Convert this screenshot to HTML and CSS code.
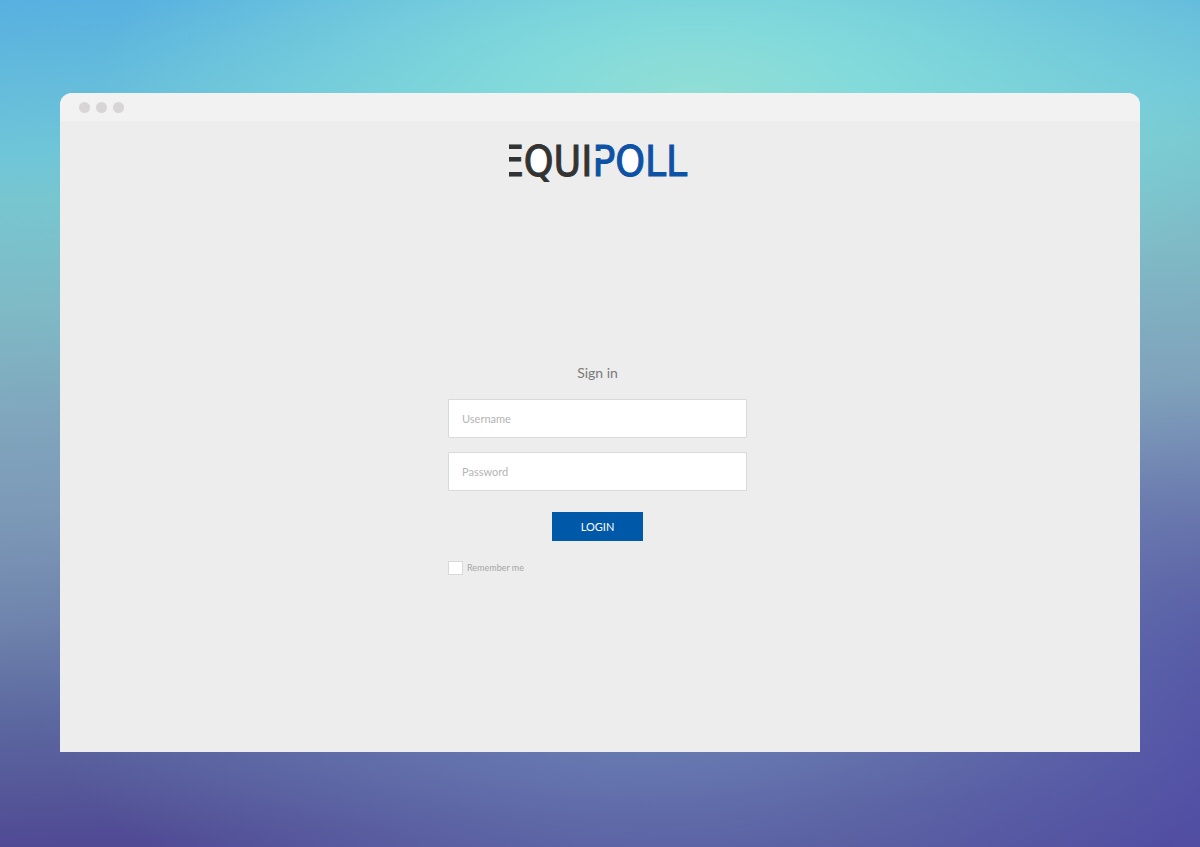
FILE: index.html
```
<!DOCTYPE html>
<html lang="en">
<head>
    <meta charset="UTF-8">
    <meta name="viewport" content="width=device-width, initial-scale=1.0">
    <title>Equipoll - Sign in</title>
    <link rel="stylesheet" href="styles.css">
</head>
<body>
    <div class="window">
        <!-- Window bar -->
        <div class="window-bar">
            <span class="dot"></span>
            <span class="dot"></span>
            <span class="dot"></span>
        </div>

        <main class="content">
            <h1 class="logo"><span class="logo-dark"><span class="cut-e">E</span><span class="fill-o">Q</span>UI</span><span class="logo-blue"><span class="cut-p">P</span><span class="fill-o">O</span>LL</span></h1>

            <!-- Login form -->
            <form class="login-form">
                <h2>Sign in</h2>
                <input class="field" type="text" placeholder="Username" aria-label="Username">
                <input class="field" type="password" placeholder="Password" aria-label="Password">
                <button type="submit">LOGIN</button>
                <div class="remember">
                    <input type="checkbox" id="remember">
                    <label for="remember">Remember me</label>
                </div>
            </form>
        </main>
    </div>
</body>
</html>
```
FILE: styles.css
```
* {
    box-sizing: border-box;
}

body {
    margin: 0;
    padding: 93px 5% 95px;
    min-height: 100vh;
    display: flex;
    font-family: Lato, sans-serif;
    background:
        radial-gradient(50% 30% at 58% 11%, #90ded6 0%, rgba(134, 222, 219, 0.85) 30%, rgba(134, 222, 219, 0) 100%),
        radial-gradient(52% 38% at 54% 78%, #6f88b9 0%, rgba(103, 121, 178, 0.8) 40%, rgba(90, 101, 171, 0) 100%),
        radial-gradient(30% 45% at 100% 90%, #5250a6 0%, rgba(82, 80, 166, 0) 100%),
        linear-gradient(177deg, #57b0e0 0%, #6fc5d8 17%, #77c6d0 22%, #7fbac6 34%, #80a6bd 46%, #7d9ab8 56%, #7085ad 68%, #5c68a0 79%, #504a94 93%, #4f4a96 100%);
}

.window {
    flex: 1;
    display: flex;
    flex-direction: column;
    background-color: #ededed;
    border-radius: 12px 12px 0 0;
    overflow: hidden;
}

.window-bar {
    display: flex;
    align-items: center;
    gap: 6px;
    height: 28px;
    padding-left: 19px;
    background-color: #f2f2f2;
}

.dot {
    width: 11px;
    height: 11px;
    border-radius: 50%;
    background-color: #d7d5d6;
}

.content {
    flex: 1;
    display: flex;
    flex-direction: column;
    align-items: center;
    padding: 17px 5px 0 0;
}

/* Logo */
.logo {
    margin: 0 8px 0 0;
    font-family: "DejaVu Sans Condensed", "DejaVu Sans", sans-serif;
    font-size: 42px;
    font-weight: normal;
    line-height: 48px;
    -webkit-text-stroke: 1px;
}

.logo-dark {
    color: #333333;
}

.logo-blue {
    color: #0d52a5;
}

.cut-e, .cut-p, .fill-o {
    position: relative;
    display: inline-block;
    z-index: 0;
}

/* Gaps in the stems of E and P */
.cut-e::after, .cut-p::after {
    content: "";
    position: absolute;
    background-color: #ededed;
}

.cut-e::after {
    left: 0;
    top: 0;
    width: 9px;
    height: 48px;
}

.cut-p::after {
    left: 0;
    top: 13px;
    width: 10px;
    height: 7px;
}

/* White inside of Q and O */
.fill-o::before {
    content: "";
    position: absolute;
    z-index: -1;
    left: 5px;
    top: 11px;
    width: 19px;
    height: 27px;
    border-radius: 50%;
    background-color: #ffffff;
}

/* Form */
.login-form {
    display: flex;
    flex-direction: column;
    align-items: center;
    width: 90%;
    max-width: 299px;
    margin: auto 0;
}

h2 {
    margin: 0 0 16px;
    font-size: 14px;
    font-weight: normal;
    line-height: 20px;
    color: #7a7a7a;
}

.field {
    width: 100%;
    height: 39px;
    margin-bottom: 14px;
    padding: 0 13px;
    border: 1px solid #d9d9d9;
    border-radius: 1px;
    background-color: #ffffff;
    font-family: inherit;
    font-size: 11px;
    color: #555555;
}

.field::placeholder {
    color: #b4b4b4;
}

button {
    width: 91px;
    height: 29px;
    margin: 7px 0 20px;
    border: none;
    background-color: #0058a8;
    color: white;
    font-family: inherit;
    font-size: 11px;
    cursor: pointer;
}

button:hover {
    background-color: #004a8f;
}

.remember {
    align-self: flex-start;
    display: flex;
    align-items: center;
    gap: 4px;
    font-size: 9px;
    line-height: 14px;
    color: #a6a6a6;
}

.remember input {
    appearance: none;
    width: 15px;
    height: 14px;
    margin: 0;
    border: 1px solid #d9d9d9;
    background-color: #ffffff;
}

.remember input:checked {
    background-color: #0058a8;
}
```
